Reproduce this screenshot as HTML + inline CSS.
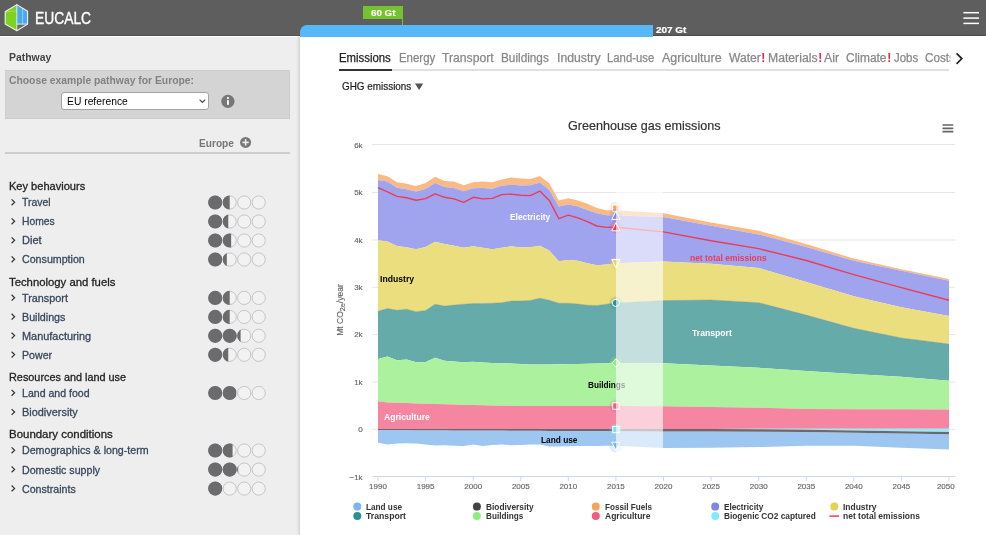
<!DOCTYPE html><html><head><meta charset="utf-8"><title>EUCALC</title><style>
html,body{margin:0;padding:0}
body{width:986px;height:535px;overflow:hidden;position:relative;background:#eee;font-family:"Liberation Sans",sans-serif;}
.t{position:absolute;white-space:nowrap;line-height:1;transform:translateY(-50%);}
#w{position:absolute;left:0;top:0;width:986px;height:535px;will-change:transform;}
.hdr{position:absolute;left:0;top:0;width:986px;height:36.3px;background:#5e5e5e;box-shadow:inset 0 -1px 0 rgba(0,0,0,.12)}
.wl{position:absolute;left:0;top:36px;width:300px;height:1px;background:#fff}
.panel{position:absolute;left:300px;top:36.3px;width:686px;height:499px;background:#fff;box-shadow:-1px 0 3px rgba(0,0,0,.16)}
.bar{position:absolute;left:300px;top:25px;width:353px;height:11.5px;background:#56b8f8;border-top-left-radius:7px}
.gt{position:absolute;left:363px;top:6px;width:39.5px;height:12.5px;background:#76c22e}
.gtl{position:absolute;left:401.5px;top:6px;width:1px;height:19px;background:#76c22e}
.box{position:absolute;left:5px;top:69.5px;width:285px;height:49.5px;background:#d4d4d4;box-sizing:border-box;border:1px dotted #c6c6c6}
.sel{position:absolute;left:60.8px;top:91.6px;width:148px;height:18.9px;box-sizing:border-box;background:#fff;border:1px solid #a3a3a3;border-radius:3px}
.hr{position:absolute;left:5px;top:152px;width:285px;height:1.5px;background:#cdcdcd}
.tabline{position:absolute;left:339px;top:69.4px;width:610px;height:1.4px;background:#e0e0e0}
.tabsel{position:absolute;left:339px;top:69.1px;width:52.5px;height:2px;background:#333}
svg{position:absolute;left:0;top:0}

</style></head><body><div id="w">
<div class="hdr"></div><div class="wl"></div><div class="panel"></div><div class="bar"></div><div class="gt"></div><div class="gtl"></div>
<div class="box"></div><div class="sel"></div><div class="hr"></div><div class="tabline"></div><div class="tabsel"></div>
<svg width="986" height="535" viewBox="0 0 986 535">
<g stroke-linejoin="round"><polygon points="16.8,4.6 16.8,30.7 5.2,24.1 5.2,11.8" fill="#7ed321"/><polygon points="16.8,4.6 27.6,11.2 27.6,24.1 16.8,24.1" fill="#4aa8ee"/><polygon points="16.8,24.1 27.6,24.1 16.8,30.7" fill="#6a6a6a"/><line x1="22.6" y1="8.2" x2="22.6" y2="24.1" stroke="#8fcaf7" stroke-width="1"/><line x1="5.2" y1="11.8" x2="16.8" y2="11" stroke="#a6e35a" stroke-width="0.8"/><line x1="16.8" y1="24.1" x2="27.6" y2="24.1" stroke="#e8f4ff" stroke-width="0.9"/><line x1="16.8" y1="4.6" x2="16.8" y2="30.7" stroke="#e8ffe0" stroke-width="0.9"/><polygon points="16.8,4.6 27.6,11.2 27.6,24.1 16.8,30.7 5.2,24.1 5.2,11.8" fill="none" stroke="#f2f2f2" stroke-width="1.1"/></g>
<rect x="963.4" y="11.95" width="15.6" height="1.5" fill="#fff"/>
<rect x="963.4" y="17.35" width="15.6" height="1.5" fill="#fff"/>
<rect x="963.4" y="22.65" width="15.6" height="1.5" fill="#fff"/>
<polyline points="199.6,99.6 202.4,102.4 205.2,99.6" fill="none" stroke="#444" stroke-width="1.2"/>
<circle cx="227.9" cy="101.3" r="6.6" fill="#777"/><rect x="227" y="100.2" width="1.9" height="4.6" fill="#fff"/><circle cx="227.95" cy="98.1" r="1.1" fill="#fff"/>
<circle cx="245.6" cy="142.4" r="5.5" fill="#777"/><rect x="242.4" y="141.6" width="6.4" height="1.6" fill="#eee"/><rect x="244.8" y="139.2" width="1.6" height="6.4" fill="#eee"/>
<polyline points="11.6,199.4 14.6,202.3 11.6,205.20000000000002" fill="none" stroke="#333" stroke-width="1.2"/>
<circle cx="215.2" cy="202.5" r="6.6" fill="#f2f2f2" stroke="#c4c4c4" stroke-width="1"/>
<circle cx="215.2" cy="202.5" r="7.1" fill="#6b6b6e"/>
<circle cx="229.7" cy="202.5" r="6.6" fill="#f2f2f2" stroke="#c4c4c4" stroke-width="1"/>
<clipPath id="c1"><rect x="222.5" y="194.5" width="7.20" height="16"/></clipPath>
<circle cx="229.7" cy="202.5" r="7.1" fill="#6b6b6e" clip-path="url(#c1)"/>
<circle cx="244.2" cy="202.5" r="6.6" fill="#f2f2f2" stroke="#c4c4c4" stroke-width="1"/>
<circle cx="258.7" cy="202.5" r="6.6" fill="#f2f2f2" stroke="#c4c4c4" stroke-width="1"/>
<polyline points="11.6,218.4 14.6,221.3 11.6,224.20000000000002" fill="none" stroke="#333" stroke-width="1.2"/>
<circle cx="215.2" cy="221.5" r="6.6" fill="#f2f2f2" stroke="#c4c4c4" stroke-width="1"/>
<circle cx="215.2" cy="221.5" r="7.1" fill="#6b6b6e"/>
<circle cx="229.7" cy="221.5" r="6.6" fill="#f2f2f2" stroke="#c4c4c4" stroke-width="1"/>
<clipPath id="c2"><rect x="222.5" y="213.5" width="5.76" height="16"/></clipPath>
<circle cx="229.7" cy="221.5" r="7.1" fill="#6b6b6e" clip-path="url(#c2)"/>
<circle cx="244.2" cy="221.5" r="6.6" fill="#f2f2f2" stroke="#c4c4c4" stroke-width="1"/>
<circle cx="258.7" cy="221.5" r="6.6" fill="#f2f2f2" stroke="#c4c4c4" stroke-width="1"/>
<polyline points="11.6,237.4 14.6,240.3 11.6,243.20000000000002" fill="none" stroke="#333" stroke-width="1.2"/>
<circle cx="215.2" cy="240.5" r="6.6" fill="#f2f2f2" stroke="#c4c4c4" stroke-width="1"/>
<circle cx="215.2" cy="240.5" r="7.1" fill="#6b6b6e"/>
<circle cx="229.7" cy="240.5" r="6.6" fill="#f2f2f2" stroke="#c4c4c4" stroke-width="1"/>
<clipPath id="c3"><rect x="222.5" y="232.5" width="8.64" height="16"/></clipPath>
<circle cx="229.7" cy="240.5" r="7.1" fill="#6b6b6e" clip-path="url(#c3)"/>
<circle cx="244.2" cy="240.5" r="6.6" fill="#f2f2f2" stroke="#c4c4c4" stroke-width="1"/>
<circle cx="258.7" cy="240.5" r="6.6" fill="#f2f2f2" stroke="#c4c4c4" stroke-width="1"/>
<polyline points="11.6,256.40000000000003 14.6,259.3 11.6,262.2" fill="none" stroke="#333" stroke-width="1.2"/>
<circle cx="215.2" cy="259.5" r="6.6" fill="#f2f2f2" stroke="#c4c4c4" stroke-width="1"/>
<circle cx="215.2" cy="259.5" r="7.1" fill="#6b6b6e"/>
<circle cx="229.7" cy="259.5" r="6.6" fill="#f2f2f2" stroke="#c4c4c4" stroke-width="1"/>
<clipPath id="c4"><rect x="222.5" y="251.5" width="4.32" height="16"/></clipPath>
<circle cx="229.7" cy="259.5" r="7.1" fill="#6b6b6e" clip-path="url(#c4)"/>
<circle cx="244.2" cy="259.5" r="6.6" fill="#f2f2f2" stroke="#c4c4c4" stroke-width="1"/>
<circle cx="258.7" cy="259.5" r="6.6" fill="#f2f2f2" stroke="#c4c4c4" stroke-width="1"/>
<polyline points="11.6,294.8 14.6,297.7 11.6,300.59999999999997" fill="none" stroke="#333" stroke-width="1.2"/>
<circle cx="215.2" cy="297.9" r="6.6" fill="#f2f2f2" stroke="#c4c4c4" stroke-width="1"/>
<circle cx="215.2" cy="297.9" r="7.1" fill="#6b6b6e"/>
<circle cx="229.7" cy="297.9" r="6.6" fill="#f2f2f2" stroke="#c4c4c4" stroke-width="1"/>
<clipPath id="c5"><rect x="222.5" y="289.9" width="7.20" height="16"/></clipPath>
<circle cx="229.7" cy="297.9" r="7.1" fill="#6b6b6e" clip-path="url(#c5)"/>
<circle cx="244.2" cy="297.9" r="6.6" fill="#f2f2f2" stroke="#c4c4c4" stroke-width="1"/>
<circle cx="258.7" cy="297.9" r="6.6" fill="#f2f2f2" stroke="#c4c4c4" stroke-width="1"/>
<polyline points="11.6,313.8 14.6,316.7 11.6,319.59999999999997" fill="none" stroke="#333" stroke-width="1.2"/>
<circle cx="215.2" cy="316.9" r="6.6" fill="#f2f2f2" stroke="#c4c4c4" stroke-width="1"/>
<circle cx="215.2" cy="316.9" r="7.1" fill="#6b6b6e"/>
<circle cx="229.7" cy="316.9" r="6.6" fill="#f2f2f2" stroke="#c4c4c4" stroke-width="1"/>
<clipPath id="c6"><rect x="222.5" y="308.9" width="7.20" height="16"/></clipPath>
<circle cx="229.7" cy="316.9" r="7.1" fill="#6b6b6e" clip-path="url(#c6)"/>
<circle cx="244.2" cy="316.9" r="6.6" fill="#f2f2f2" stroke="#c4c4c4" stroke-width="1"/>
<circle cx="258.7" cy="316.9" r="6.6" fill="#f2f2f2" stroke="#c4c4c4" stroke-width="1"/>
<polyline points="11.6,332.70000000000005 14.6,335.6 11.6,338.5" fill="none" stroke="#333" stroke-width="1.2"/>
<circle cx="215.2" cy="335.8" r="6.6" fill="#f2f2f2" stroke="#c4c4c4" stroke-width="1"/>
<circle cx="215.2" cy="335.8" r="7.1" fill="#6b6b6e"/>
<circle cx="229.7" cy="335.8" r="6.6" fill="#f2f2f2" stroke="#c4c4c4" stroke-width="1"/>
<circle cx="229.7" cy="335.8" r="7.1" fill="#6b6b6e"/>
<circle cx="244.2" cy="335.8" r="6.6" fill="#f2f2f2" stroke="#c4c4c4" stroke-width="1"/>
<clipPath id="c7"><rect x="237.0" y="327.8" width="3.60" height="16"/></clipPath>
<circle cx="244.2" cy="335.8" r="7.1" fill="#6b6b6e" clip-path="url(#c7)"/>
<circle cx="258.7" cy="335.8" r="6.6" fill="#f2f2f2" stroke="#c4c4c4" stroke-width="1"/>
<polyline points="11.6,351.70000000000005 14.6,354.6 11.6,357.5" fill="none" stroke="#333" stroke-width="1.2"/>
<circle cx="215.2" cy="354.8" r="6.6" fill="#f2f2f2" stroke="#c4c4c4" stroke-width="1"/>
<circle cx="215.2" cy="354.8" r="7.1" fill="#6b6b6e"/>
<circle cx="229.7" cy="354.8" r="6.6" fill="#f2f2f2" stroke="#c4c4c4" stroke-width="1"/>
<clipPath id="c8"><rect x="222.5" y="346.8" width="5.76" height="16"/></clipPath>
<circle cx="229.7" cy="354.8" r="7.1" fill="#6b6b6e" clip-path="url(#c8)"/>
<circle cx="244.2" cy="354.8" r="6.6" fill="#f2f2f2" stroke="#c4c4c4" stroke-width="1"/>
<circle cx="258.7" cy="354.8" r="6.6" fill="#f2f2f2" stroke="#c4c4c4" stroke-width="1"/>
<polyline points="11.6,389.90000000000003 14.6,392.8 11.6,395.7" fill="none" stroke="#333" stroke-width="1.2"/>
<circle cx="215.2" cy="393.0" r="6.6" fill="#f2f2f2" stroke="#c4c4c4" stroke-width="1"/>
<circle cx="215.2" cy="393.0" r="7.1" fill="#6b6b6e"/>
<circle cx="229.7" cy="393.0" r="6.6" fill="#f2f2f2" stroke="#c4c4c4" stroke-width="1"/>
<clipPath id="c9"><rect x="222.5" y="385.0" width="13.68" height="16"/></clipPath>
<circle cx="229.7" cy="393.0" r="7.1" fill="#6b6b6e" clip-path="url(#c9)"/>
<circle cx="244.2" cy="393.0" r="6.6" fill="#f2f2f2" stroke="#c4c4c4" stroke-width="1"/>
<circle cx="258.7" cy="393.0" r="6.6" fill="#f2f2f2" stroke="#c4c4c4" stroke-width="1"/>
<polyline points="11.6,409.1 14.6,412 11.6,414.9" fill="none" stroke="#333" stroke-width="1.2"/>
<polyline points="11.6,447.40000000000003 14.6,450.3 11.6,453.2" fill="none" stroke="#333" stroke-width="1.2"/>
<circle cx="215.2" cy="450.5" r="6.6" fill="#f2f2f2" stroke="#c4c4c4" stroke-width="1"/>
<circle cx="215.2" cy="450.5" r="7.1" fill="#6b6b6e"/>
<circle cx="229.7" cy="450.5" r="6.6" fill="#f2f2f2" stroke="#c4c4c4" stroke-width="1"/>
<clipPath id="c10"><rect x="222.5" y="442.5" width="10.08" height="16"/></clipPath>
<circle cx="229.7" cy="450.5" r="7.1" fill="#6b6b6e" clip-path="url(#c10)"/>
<circle cx="244.2" cy="450.5" r="6.6" fill="#f2f2f2" stroke="#c4c4c4" stroke-width="1"/>
<circle cx="258.7" cy="450.5" r="6.6" fill="#f2f2f2" stroke="#c4c4c4" stroke-width="1"/>
<polyline points="11.6,466.5 14.6,469.4 11.6,472.29999999999995" fill="none" stroke="#333" stroke-width="1.2"/>
<circle cx="215.2" cy="469.59999999999997" r="6.6" fill="#f2f2f2" stroke="#c4c4c4" stroke-width="1"/>
<circle cx="215.2" cy="469.59999999999997" r="7.1" fill="#6b6b6e"/>
<circle cx="229.7" cy="469.59999999999997" r="6.6" fill="#f2f2f2" stroke="#c4c4c4" stroke-width="1"/>
<circle cx="229.7" cy="469.59999999999997" r="7.1" fill="#6b6b6e"/>
<circle cx="244.2" cy="469.59999999999997" r="6.6" fill="#f2f2f2" stroke="#c4c4c4" stroke-width="1"/>
<clipPath id="c11"><rect x="237.0" y="461.59999999999997" width="1.15" height="16"/></clipPath>
<circle cx="244.2" cy="469.59999999999997" r="7.1" fill="#6b6b6e" clip-path="url(#c11)"/>
<circle cx="258.7" cy="469.59999999999997" r="6.6" fill="#f2f2f2" stroke="#c4c4c4" stroke-width="1"/>
<polyline points="11.6,485.5 14.6,488.4 11.6,491.29999999999995" fill="none" stroke="#333" stroke-width="1.2"/>
<circle cx="215.2" cy="488.59999999999997" r="6.6" fill="#f2f2f2" stroke="#c4c4c4" stroke-width="1"/>
<circle cx="215.2" cy="488.59999999999997" r="7.1" fill="#6b6b6e"/>
<circle cx="229.7" cy="488.59999999999997" r="6.6" fill="#f2f2f2" stroke="#c4c4c4" stroke-width="1"/>
<circle cx="244.2" cy="488.59999999999997" r="6.6" fill="#f2f2f2" stroke="#c4c4c4" stroke-width="1"/>
<circle cx="258.7" cy="488.59999999999997" r="6.6" fill="#f2f2f2" stroke="#c4c4c4" stroke-width="1"/>
<polyline points="956.6,53.4 961.8,58.6 956.6,63.8" fill="none" stroke="#222" stroke-width="1.7"/>
<polygon points="415,83.4 423.2,83.4 419.1,90" fill="#555"/>
<line x1="943.2" y1="125.0" x2="952.6" y2="125.0" stroke="#666" stroke-width="1.7" stroke-linecap="round"/>
<line x1="943.2" y1="128.35" x2="952.6" y2="128.35" stroke="#666" stroke-width="1.7" stroke-linecap="round"/>
<line x1="943.2" y1="131.7" x2="952.6" y2="131.7" stroke="#666" stroke-width="1.7" stroke-linecap="round"/>
<rect x="372.3" y="144.0" width="583" height="1" fill="#e6e6e6"/>
<rect x="372.3" y="192.0" width="583" height="1" fill="#e6e6e6"/>
<rect x="372.3" y="239.5" width="583" height="1" fill="#e6e6e6"/>
<rect x="372.3" y="286.8" width="583" height="1" fill="#e6e6e6"/>
<rect x="372.3" y="334.1" width="583" height="1" fill="#e6e6e6"/>
<rect x="372.3" y="381.5" width="583" height="1" fill="#e6e6e6"/>
<rect x="372.3" y="428.8" width="583" height="1" fill="#e6e6e6"/>
<polygon points="378.0,174.1 387.5,176.3 397.0,182.3 406.6,183.8 416.1,186.0 425.6,183.0 435.1,176.8 444.6,181.0 454.1,181.6 463.7,185.3 473.2,182.3 482.7,181.6 492.2,182.3 501.7,179.5 511.2,177.6 520.8,178.6 530.3,179.1 539.8,176.1 549.3,183.3 558.8,200.4 568.3,198.3 577.9,200.4 587.4,203.8 596.9,207.9 606.4,210.2 615.9,210.2 663.5,213.2 711.1,222.4 758.7,230.8 806.3,244.1 853.8,258.6 901.4,269.3 949.0,279.1 949.0,280.7 901.4,270.8 853.8,260.8 806.3,247.0 758.7,234.4 711.1,225.8 663.5,217.1 615.9,215.6 606.4,215.2 596.9,213.2 587.4,209.9 577.9,206.6 568.3,204.6 558.8,206.6 549.3,190.0 539.8,182.5 530.3,185.3 520.8,185.5 511.2,184.5 501.7,185.8 492.2,188.8 482.7,188.1 473.2,188.3 463.7,191.3 454.1,188.0 444.6,187.1 435.1,183.0 425.6,189.1 416.1,191.6 406.6,189.3 397.0,187.8 387.5,181.6 378.0,180.0" fill="#f9ba85"/>
<polygon points="378.0,180.0 387.5,181.6 397.0,187.8 406.6,189.3 416.1,191.6 425.6,189.1 435.1,183.0 444.6,187.1 454.1,188.0 463.7,191.3 473.2,188.3 482.7,188.1 492.2,188.8 501.7,185.8 511.2,184.5 520.8,185.5 530.3,185.3 539.8,182.5 549.3,190.0 558.8,206.6 568.3,204.6 577.9,206.6 587.4,209.9 596.9,213.2 606.4,215.2 615.9,215.6 663.5,217.1 711.1,225.8 758.7,234.4 806.3,247.0 853.8,260.8 901.4,270.8 949.0,280.7 949.0,315.9 901.4,307.3 853.8,296.3 806.3,282.0 758.7,267.9 711.1,263.8 663.5,261.5 615.9,263.3 606.4,264.5 596.9,265.3 587.4,263.3 577.9,260.8 568.3,260.0 558.8,261.3 549.3,250.5 539.8,245.8 530.3,247.3 520.8,247.4 511.2,246.3 501.7,247.8 492.2,249.2 482.7,247.8 473.2,246.2 463.7,247.7 454.1,245.7 444.6,244.0 435.1,241.8 425.6,247.0 416.1,249.3 406.6,247.2 397.0,246.0 387.5,241.5 378.0,240.3" fill="#a0a4ef"/>
<polygon points="378.0,240.3 387.5,241.5 397.0,246.0 406.6,247.2 416.1,249.3 425.6,247.0 435.1,241.8 444.6,244.0 454.1,245.7 463.7,247.7 473.2,246.2 482.7,247.8 492.2,249.2 501.7,247.8 511.2,246.3 520.8,247.4 530.3,247.3 539.8,245.8 549.3,250.5 558.8,261.3 568.3,260.0 577.9,260.8 587.4,263.3 596.9,265.3 606.4,264.5 615.9,263.3 663.5,261.5 711.1,263.8 758.7,267.9 806.3,282.0 853.8,296.3 901.4,307.3 949.0,315.9 949.0,344.1 901.4,337.9 853.8,328.3 806.3,315.1 758.7,302.7 711.1,299.9 663.5,300.6 615.9,302.9 606.4,304.2 596.9,305.5 587.4,305.2 577.9,304.0 568.3,303.2 558.8,303.2 549.3,300.2 539.8,298.2 530.3,300.4 520.8,300.9 511.2,301.1 501.7,302.7 492.2,303.2 482.7,303.6 473.2,303.6 463.7,304.2 454.1,305.1 444.6,306.1 435.1,304.2 425.6,310.5 416.1,311.7 406.6,309.2 397.0,310.2 387.5,308.5 378.0,311.2" fill="#ebde7f"/>
<polygon points="378.0,311.2 387.5,308.5 397.0,310.2 406.6,309.2 416.1,311.7 425.6,310.5 435.1,304.2 444.6,306.1 454.1,305.1 463.7,304.2 473.2,303.6 482.7,303.6 492.2,303.2 501.7,302.7 511.2,301.1 520.8,300.9 530.3,300.4 539.8,298.2 549.3,300.2 558.8,303.2 568.3,303.2 577.9,304.0 587.4,305.2 596.9,305.5 606.4,304.2 615.9,302.9 663.5,300.6 711.1,299.9 758.7,302.7 806.3,315.1 853.8,328.3 901.4,337.9 949.0,344.1 949.0,380.8 901.4,376.8 853.8,374.0 806.3,371.0 758.7,367.8 711.1,365.5 663.5,363.3 615.9,363.0 606.4,363.2 596.9,363.5 587.4,363.8 577.9,364.0 568.3,364.1 558.8,364.3 549.3,364.5 539.8,364.6 530.3,364.6 520.8,364.0 511.2,363.5 501.7,363.3 492.2,363.1 482.7,362.5 473.2,361.8 463.7,362.3 454.1,361.6 444.6,360.8 435.1,357.8 425.6,362.0 416.1,362.3 406.6,359.5 397.0,360.3 387.5,356.6 378.0,359.1" fill="#64aba9"/>
<polygon points="378.0,359.1 387.5,356.6 397.0,360.3 406.6,359.5 416.1,362.3 425.6,362.0 435.1,357.8 444.6,360.8 454.1,361.6 463.7,362.3 473.2,361.8 482.7,362.5 492.2,363.1 501.7,363.3 511.2,363.5 520.8,364.0 530.3,364.6 539.8,364.6 549.3,364.5 558.8,364.3 568.3,364.1 577.9,364.0 587.4,363.8 596.9,363.5 606.4,363.2 615.9,363.0 663.5,363.3 711.1,365.5 758.7,367.8 806.3,371.0 853.8,374.0 901.4,376.8 949.0,380.8 949.0,409.4 901.4,409.3 853.8,409.2 806.3,409.0 758.7,407.7 711.1,406.9 663.5,406.3 615.9,406.0 606.4,406.0 596.9,406.0 587.4,406.0 577.9,406.0 568.3,406.0 558.8,406.0 549.3,406.0 539.8,406.0 530.3,406.0 520.8,405.9 511.2,405.8 501.7,405.7 492.2,405.5 482.7,405.3 473.2,405.1 463.7,404.9 454.1,404.6 444.6,404.3 435.1,404.0 425.6,403.7 416.1,403.4 406.6,403.1 397.0,402.8 387.5,402.4 378.0,401.2" fill="#acf29e"/>
<polygon points="378.0,401.2 387.5,402.4 397.0,402.8 406.6,403.1 416.1,403.4 425.6,403.7 435.1,404.0 444.6,404.3 454.1,404.6 463.7,404.9 473.2,405.1 482.7,405.3 492.2,405.5 501.7,405.7 511.2,405.8 520.8,405.9 530.3,406.0 539.8,406.0 549.3,406.0 558.8,406.0 568.3,406.0 577.9,406.0 587.4,406.0 596.9,406.0 606.4,406.0 615.9,406.0 663.5,406.3 711.1,406.9 758.7,407.7 806.3,409.0 853.8,409.2 901.4,409.3 949.0,409.4 949.0,428.7 901.4,428.7 853.8,428.7 806.3,428.7 758.7,428.8 711.1,428.9 663.5,429.0 615.9,429.0 606.4,429.0 596.9,429.0 587.4,429.0 577.9,429.0 568.3,429.0 558.8,429.0 549.3,429.0 539.8,429.0 530.3,429.0 520.8,429.0 511.2,429.0 501.7,429.0 492.2,429.0 482.7,429.0 473.2,429.0 463.7,429.0 454.1,429.0 444.6,429.0 435.1,429.0 425.6,429.0 416.1,429.0 406.6,429.0 397.0,429.0 387.5,429.0 378.0,429.0" fill="#f585a0"/>
<polygon points="378.0,430.0 387.5,430.0 397.0,430.1 406.6,430.1 416.1,430.2 425.6,430.2 435.1,430.3 444.6,430.3 454.1,430.4 463.7,430.4 473.2,430.5 482.7,430.5 492.2,430.6 501.7,430.6 511.2,430.7 520.8,430.7 530.3,430.8 539.8,430.8 549.3,430.9 558.8,430.9 568.3,431.0 577.9,431.0 587.4,431.0 596.9,431.1 606.4,431.1 615.9,431.2 663.5,431.5 711.1,431.6 758.7,431.7 806.3,432.0 853.8,432.8 901.4,433.5 949.0,434.2 949.0,449.5 901.4,447.7 853.8,445.7 806.3,445.8 758.7,447.1 711.1,447.7 663.5,447.9 615.9,445.7 606.4,445.8 596.9,445.9 587.4,446.0 577.9,446.0 568.3,446.2 558.8,446.4 549.3,446.6 539.8,444.4 530.3,444.6 520.8,445.0 511.2,445.2 501.7,444.4 492.2,444.9 482.7,445.9 473.2,444.6 463.7,445.9 454.1,445.7 444.6,445.2 435.1,445.6 425.6,444.4 416.1,443.6 406.6,443.2 397.0,443.4 387.5,444.6 378.0,442.7" fill="#9dc7f1"/>
<polygon points="378.0,429.0 387.5,429.0 397.0,429.0 406.6,429.0 416.1,429.0 425.6,429.0 435.1,429.0 444.6,429.0 454.1,429.0 463.7,429.0 473.2,429.0 482.7,429.0 492.2,429.0 501.7,429.0 511.2,429.0 520.8,429.0 530.3,429.0 539.8,429.0 549.3,429.0 558.8,429.0 568.3,429.0 577.9,429.0 587.4,429.0 596.9,429.0 606.4,429.0 615.9,429.0 663.5,429.0 711.1,428.9 758.7,428.8 806.3,428.7 853.8,428.7 901.4,428.7 949.0,428.7 949.0,431.9 901.4,431.2 853.8,430.5 806.3,429.7 758.7,429.3 711.1,429.1 663.5,429.0 615.9,429.0 606.4,429.0 596.9,429.0 587.4,429.0 577.9,429.0 568.3,429.0 558.8,429.0 549.3,429.0 539.8,429.0 530.3,429.0 520.8,429.0 511.2,429.0 501.7,429.0 492.2,429.0 482.7,429.0 473.2,429.0 463.7,429.0 454.1,429.0 444.6,429.0 435.1,429.0 425.6,429.0 416.1,429.0 406.6,429.0 397.0,429.0 387.5,429.0 378.0,429.0" fill="#8fecfa"/>
<polygon points="378.0,429.0 387.5,429.0 397.0,429.0 406.6,429.0 416.1,429.0 425.6,429.0 435.1,429.0 444.6,429.0 454.1,429.0 463.7,429.0 473.2,429.0 482.7,429.0 492.2,429.0 501.7,429.0 511.2,429.0 520.8,429.0 530.3,429.0 539.8,429.0 549.3,429.0 558.8,429.0 568.3,429.0 577.9,429.0 587.4,429.0 596.9,429.0 606.4,429.0 615.9,429.0 663.5,429.0 711.1,429.1 758.7,429.3 806.3,429.7 853.8,430.5 901.4,431.2 949.0,431.9 949.0,434.2 901.4,433.5 853.8,432.8 806.3,432.0 758.7,431.7 711.1,431.6 663.5,431.5 615.9,431.2 606.4,431.1 596.9,431.1 587.4,431.0 577.9,431.0 568.3,431.0 558.8,430.9 549.3,430.9 539.8,430.8 530.3,430.8 520.8,430.7 511.2,430.7 501.7,430.6 492.2,430.6 482.7,430.5 473.2,430.5 463.7,430.4 454.1,430.4 444.6,430.3 435.1,430.3 425.6,430.2 416.1,430.2 406.6,430.1 397.0,430.1 387.5,430.0 378.0,430.0" fill="#6a6a6e"/>
<polyline fill="none" stroke="#8a8a78" stroke-opacity=".55" stroke-width="0.6" points="378.0,311.2 387.5,308.5 397.0,310.2 406.6,309.2 416.1,311.7 425.6,310.5 435.1,304.2 444.6,306.1 454.1,305.1 463.7,304.2 473.2,303.6 482.7,303.6 492.2,303.2 501.7,302.7 511.2,301.1 520.8,300.9 530.3,300.4 539.8,298.2 549.3,300.2 558.8,303.2 568.3,303.2 577.9,304.0 587.4,305.2 596.9,305.5 606.4,304.2 615.9,302.9 663.5,300.6 711.1,299.9 758.7,302.7 806.3,315.1 853.8,328.3 901.4,337.9 949.0,344.1"/>
<polyline fill="none" stroke="#ec3c55" stroke-width="1.4" stroke-linejoin="round" points="378.0,187.6 387.5,191.8 397.0,196.4 406.6,197.8 416.1,200.3 425.6,198.6 435.1,193.8 444.6,197.3 454.1,198.9 463.7,202.4 473.2,197.3 482.7,198.9 492.2,198.4 501.7,194.6 511.2,194.1 520.8,195.3 530.3,195.6 539.8,191.1 549.3,200.4 558.8,218.7 568.3,215.2 577.9,217.9 587.4,221.6 596.9,226.0 606.4,227.4 615.9,227.2 663.5,231.9 711.1,240.7 758.7,248.6 806.3,260.5 853.8,274.6 901.4,287.7 949.0,300.2"/>
<circle cx="615.9" cy="208.2" r="6.5" fill="#f7a35c" fill-opacity=".22"/>
<rect x="612.7" y="205.0" width="6.4" height="6.4" fill="#f7a35c" stroke="#fff" stroke-width="1"/>
<circle cx="615.9" cy="215.6" r="6.5" fill="#8085e9" fill-opacity=".22"/>
<polygon points="615.9,211.4 620.1,219.4 611.7,219.4" fill="#8085e9" stroke="#fff" stroke-width="1"/>
<circle cx="615.9" cy="227" r="6.5" fill="#ec3c55" fill-opacity=".22"/>
<polygon points="615.9,222.8 620.1,230.8 611.7,230.8" fill="#ec3c55" stroke="#fff" stroke-width="1"/>
<circle cx="615.9" cy="263.3" r="6.5" fill="#e4d354" fill-opacity=".22"/>
<polygon points="615.9,267.5 620.1,259.5 611.7,259.5" fill="#e4d354" stroke="#fff" stroke-width="1"/>
<circle cx="615.9" cy="302.9" r="6.5" fill="#2b908f" fill-opacity=".22"/>
<circle cx="615.9" cy="302.9" r="3.6" fill="#2b908f" stroke="#fff" stroke-width="1"/>
<circle cx="615.9" cy="363" r="6.5" fill="#90ed7d" fill-opacity=".22"/>
<polygon points="615.9,358.8 620.1,363 615.9,367.2 611.7,363" fill="#90ed7d" stroke="#fff" stroke-width="1"/>
<circle cx="615.9" cy="406" r="6.5" fill="#f15c80" fill-opacity=".22"/>
<rect x="612.7" y="402.8" width="6.4" height="6.4" fill="#f15c80" stroke="#fff" stroke-width="1"/>
<circle cx="615.9" cy="429.5" r="6.5" fill="#6fe3f7" fill-opacity=".22"/>
<rect x="612.7" y="426.3" width="6.4" height="6.4" fill="#6fe3f7" stroke="#fff" stroke-width="1"/>
<circle cx="615.9" cy="446" r="6.5" fill="#7cb5ec" fill-opacity=".22"/>
<polygon points="615.9,450.2 620.1,442.2 611.7,442.2" fill="#7cb5ec" stroke="#fff" stroke-width="1"/>
<rect x="372.3" y="476" width="583" height="1" fill="#ccd6eb"/>
<rect x="377.5" y="476" width="1" height="5" fill="#ccd6eb"/>
<rect x="425.1" y="476" width="1" height="5" fill="#ccd6eb"/>
<rect x="472.7" y="476" width="1" height="5" fill="#ccd6eb"/>
<rect x="520.3" y="476" width="1" height="5" fill="#ccd6eb"/>
<rect x="567.8" y="476" width="1" height="5" fill="#ccd6eb"/>
<rect x="615.4" y="476" width="1" height="5" fill="#ccd6eb"/>
<rect x="663.0" y="476" width="1" height="5" fill="#ccd6eb"/>
<rect x="710.6" y="476" width="1" height="5" fill="#ccd6eb"/>
<rect x="758.2" y="476" width="1" height="5" fill="#ccd6eb"/>
<rect x="805.8" y="476" width="1" height="5" fill="#ccd6eb"/>
<rect x="853.3" y="476" width="1" height="5" fill="#ccd6eb"/>
<rect x="900.9" y="476" width="1" height="5" fill="#ccd6eb"/>
<rect x="948.5" y="476" width="1" height="5" fill="#ccd6eb"/>
<circle cx="357.3" cy="506.6" r="4" fill="#7cb5ec"/>
<circle cx="476.9" cy="506.6" r="4" fill="#434348"/>
<circle cx="595.8" cy="506.6" r="4" fill="#f7a35c"/>
<circle cx="715.2" cy="506.6" r="4" fill="#8085e9"/>
<circle cx="834.3" cy="506.6" r="4" fill="#e4d354"/>
<circle cx="357.3" cy="516.1" r="4" fill="#2b908f"/>
<circle cx="476.9" cy="516.1" r="4" fill="#90ed7d"/>
<circle cx="595.8" cy="516.1" r="4" fill="#f15c80"/>
<circle cx="715.2" cy="516.1" r="4" fill="#80eaff"/>
<line x1="829.4" y1="516.1" x2="839" y2="516.1" stroke="#ec3c55" stroke-width="1.5"/>
</svg>
<div class="t" id="yt" style="left:340.4px;top:310.2px;font-size:8.5px;color:#666;-webkit-text-stroke:0.15px #666;transform:translate(-50%,-50%) rotate(-90deg)">Mt CO<span style="font-size:7.2px;position:relative;top:1.6px">2e</span>/year</div>
<div class="t" id="t0" style="top:18.6px;font-size:16px;font-weight:normal;color:#fff;left:35.3px;transform-origin:0 50%;transform:translateY(-50%) scaleX(0.8643);-webkit-text-stroke:0.35px #fff;">EUCALC</div>
<div class="t" id="t1" style="top:12.8px;font-size:9.5px;font-weight:bold;color:#fff;left:370.8px;transform-origin:0 50%;transform:translateY(-50%) scaleX(1.0309);-webkit-text-stroke:0.15px #fff;">60 Gt</div>
<div class="t" id="t2" style="top:31.0px;font-size:9.2px;font-weight:bold;color:#fff;left:656.4px;transform-origin:0 50%;transform:translateY(-50%) scaleX(1.0821);-webkit-text-stroke:0.2px #fff;">207 Gt</div>
<div class="t" id="t3" style="top:56.6px;font-size:11px;font-weight:bold;color:#444;left:8.5px;transform-origin:0 50%;transform:translateY(-50%) scaleX(0.9476);">Pathway</div>
<div class="t" id="t4" style="top:79.5px;font-size:11px;font-weight:bold;color:#828282;left:8.5px;transform-origin:0 50%;transform:translateY(-50%) scaleX(0.9399);">Choose example pathway for Europe:</div>
<div class="t" id="t5" style="top:101.0px;font-size:10.5px;font-weight:normal;color:#000;left:67px;transform-origin:0 50%;transform:translateY(-50%) scaleX(0.9826);">EU reference</div>
<div class="t" id="t6" style="top:142.8px;font-size:11px;font-weight:bold;color:#777;left:198.7px;transform-origin:0 50%;transform:translateY(-50%) scaleX(0.9207);">Europe</div>
<div class="t" id="t7" style="top:187.39999999999998px;font-size:11.5px;font-weight:normal;color:#222;left:8.6px;transform-origin:0 50%;transform:translateY(-50%) scaleX(0.9611);-webkit-text-stroke:0.3px #222;">Key behaviours</div>
<div class="t" id="t8" style="top:282.5px;font-size:11.5px;font-weight:normal;color:#222;left:8.6px;transform-origin:0 50%;transform:translateY(-50%) scaleX(0.9846);-webkit-text-stroke:0.3px #222;">Technology and fuels</div>
<div class="t" id="t9" style="top:377.8px;font-size:11.5px;font-weight:normal;color:#222;left:8.6px;transform-origin:0 50%;transform:translateY(-50%) scaleX(0.9441);-webkit-text-stroke:0.3px #222;">Resources and land use</div>
<div class="t" id="t10" style="top:435.2px;font-size:11.5px;font-weight:normal;color:#222;left:8.6px;transform-origin:0 50%;transform:translateY(-50%) scaleX(0.9960);-webkit-text-stroke:0.3px #222;">Boundary conditions</div>
<div class="t" id="t11" style="top:202.4px;font-size:11px;font-weight:normal;color:#38485c;left:22.4px;transform-origin:0 50%;transform:translateY(-50%) scaleX(0.9484);-webkit-text-stroke:0.3px #38485c;">Travel</div>
<div class="t" id="t12" style="top:221.4px;font-size:11px;font-weight:normal;color:#38485c;left:22.4px;transform-origin:0 50%;transform:translateY(-50%) scaleX(0.9385);-webkit-text-stroke:0.3px #38485c;">Homes</div>
<div class="t" id="t13" style="top:240.4px;font-size:11px;font-weight:normal;color:#38485c;left:22.4px;transform-origin:0 50%;transform:translateY(-50%) scaleX(1.0070);-webkit-text-stroke:0.3px #38485c;">Diet</div>
<div class="t" id="t14" style="top:259.40000000000003px;font-size:11px;font-weight:normal;color:#38485c;left:22.4px;transform-origin:0 50%;transform:translateY(-50%) scaleX(0.9687);-webkit-text-stroke:0.3px #38485c;">Consumption</div>
<div class="t" id="t15" style="top:297.8px;font-size:11px;font-weight:normal;color:#38485c;left:22.4px;transform-origin:0 50%;transform:translateY(-50%) scaleX(0.9835);-webkit-text-stroke:0.3px #38485c;">Transport</div>
<div class="t" id="t16" style="top:316.8px;font-size:11px;font-weight:normal;color:#38485c;left:22.4px;transform-origin:0 50%;transform:translateY(-50%) scaleX(0.9722);-webkit-text-stroke:0.3px #38485c;">Buildings</div>
<div class="t" id="t17" style="top:335.70000000000005px;font-size:11px;font-weight:normal;color:#38485c;left:22.4px;transform-origin:0 50%;transform:translateY(-50%) scaleX(0.9926);-webkit-text-stroke:0.3px #38485c;">Manufacturing</div>
<div class="t" id="t18" style="top:354.70000000000005px;font-size:11px;font-weight:normal;color:#38485c;left:22.4px;transform-origin:0 50%;transform:translateY(-50%) scaleX(0.9651);-webkit-text-stroke:0.3px #38485c;">Power</div>
<div class="t" id="t19" style="top:392.90000000000003px;font-size:11px;font-weight:normal;color:#38485c;left:22.4px;transform-origin:0 50%;transform:translateY(-50%) scaleX(0.9608);-webkit-text-stroke:0.3px #38485c;">Land and food</div>
<div class="t" id="t20" style="top:412.1px;font-size:11px;font-weight:normal;color:#38485c;left:22.4px;transform-origin:0 50%;transform:translateY(-50%) scaleX(0.9920);-webkit-text-stroke:0.3px #38485c;">Biodiversity</div>
<div class="t" id="t21" style="top:450.40000000000003px;font-size:11px;font-weight:normal;color:#38485c;left:22.4px;transform-origin:0 50%;transform:translateY(-50%) scaleX(0.9676);-webkit-text-stroke:0.3px #38485c;">Demographics &amp; long-term</div>
<div class="t" id="t22" style="top:469.5px;font-size:11px;font-weight:normal;color:#38485c;left:22.4px;transform-origin:0 50%;transform:translateY(-50%) scaleX(0.9677);-webkit-text-stroke:0.3px #38485c;">Domestic supply</div>
<div class="t" id="t23" style="top:488.5px;font-size:11px;font-weight:normal;color:#38485c;left:22.4px;transform-origin:0 50%;transform:translateY(-50%) scaleX(0.9669);-webkit-text-stroke:0.3px #38485c;">Constraints</div>
<div class="t" id="t24" style="top:57.8px;font-size:12px;font-weight:normal;color:#222;left:339.4px;transform-origin:0 50%;transform:translateY(-50%) scaleX(0.9472);-webkit-text-stroke:0.25px #222;">Emissions</div>
<div class="t" id="t25" style="top:57.8px;font-size:12px;font-weight:normal;color:#888;left:398.6px;transform-origin:0 50%;transform:translateY(-50%) scaleX(0.9518);-webkit-text-stroke:0.25px #888;">Energy</div>
<div class="t" id="t26" style="top:57.8px;font-size:12px;font-weight:normal;color:#888;left:442.1px;transform-origin:0 50%;transform:translateY(-50%) scaleX(1.0136);-webkit-text-stroke:0.25px #888;">Transport</div>
<div class="t" id="t27" style="top:57.8px;font-size:12px;font-weight:normal;color:#888;left:501.4px;transform-origin:0 50%;transform:translateY(-50%) scaleX(0.9815);-webkit-text-stroke:0.25px #888;">Buildings</div>
<div class="t" id="t28" style="top:57.8px;font-size:12px;font-weight:normal;color:#888;left:556.9px;transform-origin:0 50%;transform:translateY(-50%) scaleX(1.0190);-webkit-text-stroke:0.25px #888;">Industry</div>
<div class="t" id="t29" style="top:57.8px;font-size:12px;font-weight:normal;color:#888;left:607.4px;transform-origin:0 50%;transform:translateY(-50%) scaleX(0.9431);-webkit-text-stroke:0.25px #888;">Land-use</div>
<div class="t" id="t30" style="top:57.8px;font-size:12px;font-weight:normal;color:#888;left:661.7px;transform-origin:0 50%;transform:translateY(-50%) scaleX(1.0391);-webkit-text-stroke:0.25px #888;">Agriculture</div>
<div class="t" id="t31" style="top:57.8px;font-size:12px;font-weight:normal;color:#888;left:728.6px;transform-origin:0 50%;transform:translateY(-50%) scaleX(1.0075);-webkit-text-stroke:0.25px #888;">Water</div>
<div class="t" id="t32" style="top:57.8px;font-size:12px;font-weight:normal;color:#888;left:767.8px;transform-origin:0 50%;transform:translateY(-50%) scaleX(1.0167);-webkit-text-stroke:0.25px #888;">Materials</div>
<div class="t" id="t33" style="top:57.8px;font-size:12px;font-weight:normal;color:#888;left:824px;transform-origin:0 50%;transform:translateY(-50%) scaleX(1.0224);-webkit-text-stroke:0.25px #888;">Air</div>
<div class="t" id="t34" style="top:57.8px;font-size:12px;font-weight:normal;color:#888;left:845.8px;transform-origin:0 50%;transform:translateY(-50%) scaleX(0.9954);-webkit-text-stroke:0.25px #888;">Climate</div>
<div class="t" id="t35" style="top:57.8px;font-size:12px;font-weight:normal;color:#888;left:893.6px;transform-origin:0 50%;transform:translateY(-50%) scaleX(0.9503);-webkit-text-stroke:0.25px #888;">Jobs</div>
<div class="t" id="t36" style="top:57.8px;font-size:12px;font-weight:normal;color:#888;left:925px;transform-origin:0 50%;transform:translateY(-50%) scaleX(0.9750);width:26.2px;overflow:hidden;-webkit-text-stroke:0.25px #888;">Costs</div>
<div class="t" id="t37" style="top:57.8px;font-size:12px;font-weight:bold;color:#ee2440;left:761.3px;">!</div>
<div class="t" id="t38" style="top:57.8px;font-size:12px;font-weight:bold;color:#ee2440;left:818.3px;">!</div>
<div class="t" id="t39" style="top:57.8px;font-size:12px;font-weight:bold;color:#ee2440;left:887.3px;">!</div>
<div class="t" id="t40" style="top:86.3px;font-size:10.5px;font-weight:normal;color:#222;left:342.2px;transform-origin:0 50%;transform:translateY(-50%) scaleX(0.9427);-webkit-text-stroke:0.2px #222;">GHG emissions</div>
<div class="t" id="t41" style="top:124.6px;font-size:13px;font-weight:normal;color:#333;left:568px;transform-origin:0 50%;transform:translateY(-50%) scaleX(0.9681);-webkit-text-stroke:0.2px #333;">Greenhouse gas emissions</div>
<div class="t" id="t42" style="top:145.5px;font-size:8px;font-weight:normal;color:#666;right:623.4px;-webkit-text-stroke:0.15px #666;">6k</div>
<div class="t" id="t43" style="top:193px;font-size:8px;font-weight:normal;color:#666;right:623.4px;-webkit-text-stroke:0.15px #666;">5k</div>
<div class="t" id="t44" style="top:240.5px;font-size:8px;font-weight:normal;color:#666;right:623.4px;-webkit-text-stroke:0.15px #666;">4k</div>
<div class="t" id="t45" style="top:287.7px;font-size:8px;font-weight:normal;color:#666;right:623.4px;-webkit-text-stroke:0.15px #666;">3k</div>
<div class="t" id="t46" style="top:335px;font-size:8px;font-weight:normal;color:#666;right:623.4px;-webkit-text-stroke:0.15px #666;">2k</div>
<div class="t" id="t47" style="top:382.5px;font-size:8px;font-weight:normal;color:#666;right:623.4px;-webkit-text-stroke:0.15px #666;">1k</div>
<div class="t" id="t48" style="top:429.7px;font-size:8px;font-weight:normal;color:#666;right:623.4px;-webkit-text-stroke:0.15px #666;">0</div>
<div class="t" id="t49" style="top:478.0px;font-size:8px;font-weight:normal;color:#666;right:623.4px;-webkit-text-stroke:0.15px #666;">−1k</div>
<div class="t" id="t50" style="top:487.0px;font-size:8px;font-weight:normal;color:#666;left:378.0px;transform:translate(-50%,-50%);-webkit-text-stroke:0.15px #666;">1990</div>
<div class="t" id="t51" style="top:487.0px;font-size:8px;font-weight:normal;color:#666;left:425.6px;transform:translate(-50%,-50%);-webkit-text-stroke:0.15px #666;">1995</div>
<div class="t" id="t52" style="top:487.0px;font-size:8px;font-weight:normal;color:#666;left:473.2px;transform:translate(-50%,-50%);-webkit-text-stroke:0.15px #666;">2000</div>
<div class="t" id="t53" style="top:487.0px;font-size:8px;font-weight:normal;color:#666;left:520.8px;transform:translate(-50%,-50%);-webkit-text-stroke:0.15px #666;">2005</div>
<div class="t" id="t54" style="top:487.0px;font-size:8px;font-weight:normal;color:#666;left:568.3px;transform:translate(-50%,-50%);-webkit-text-stroke:0.15px #666;">2010</div>
<div class="t" id="t55" style="top:487.0px;font-size:8px;font-weight:normal;color:#666;left:615.9px;transform:translate(-50%,-50%);-webkit-text-stroke:0.15px #666;">2015</div>
<div class="t" id="t56" style="top:487.0px;font-size:8px;font-weight:normal;color:#666;left:663.5px;transform:translate(-50%,-50%);-webkit-text-stroke:0.15px #666;">2020</div>
<div class="t" id="t57" style="top:487.0px;font-size:8px;font-weight:normal;color:#666;left:711.1px;transform:translate(-50%,-50%);-webkit-text-stroke:0.15px #666;">2025</div>
<div class="t" id="t58" style="top:487.0px;font-size:8px;font-weight:normal;color:#666;left:758.7px;transform:translate(-50%,-50%);-webkit-text-stroke:0.15px #666;">2030</div>
<div class="t" id="t59" style="top:487.0px;font-size:8px;font-weight:normal;color:#666;left:806.3px;transform:translate(-50%,-50%);-webkit-text-stroke:0.15px #666;">2035</div>
<div class="t" id="t60" style="top:487.0px;font-size:8px;font-weight:normal;color:#666;left:853.8px;transform:translate(-50%,-50%);-webkit-text-stroke:0.15px #666;">2040</div>
<div class="t" id="t61" style="top:487.0px;font-size:8px;font-weight:normal;color:#666;left:901.4px;transform:translate(-50%,-50%);-webkit-text-stroke:0.15px #666;">2045</div>
<div class="t" id="t62" style="top:487.0px;font-size:8px;font-weight:normal;color:#666;left:945.8px;transform:translate(-50%,-50%);-webkit-text-stroke:0.15px #666;">2050</div>
<div class="t" id="t63" style="top:216.8px;font-size:8.5px;font-weight:bold;color:#fff;left:510.3px;transform-origin:0 50%;transform:translateY(-50%) scaleX(0.9892);">Electricity</div>
<div class="t" id="t64" style="top:279px;font-size:8.5px;font-weight:bold;color:#000;left:380.3px;transform-origin:0 50%;transform:translateY(-50%) scaleX(1.0170);">Industry</div>
<div class="t" id="t65" style="top:258px;font-size:8.5px;font-weight:bold;color:#ec3c55;left:689.8px;transform-origin:0 50%;transform:translateY(-50%) scaleX(0.9948);">net total emissions</div>
<div class="t" id="t66" style="top:332.8px;font-size:8.5px;font-weight:bold;color:#fff;left:691.6px;transform-origin:0 50%;transform:translateY(-50%) scaleX(1.0152);">Transport</div>
<div class="t" id="t67" style="top:385.1px;font-size:8.5px;font-weight:bold;color:#000;left:587.9px;transform-origin:0 50%;transform:translateY(-50%) scaleX(0.9656);">Buildings</div>
<div class="t" id="t68" style="top:416.5px;font-size:8.5px;font-weight:bold;color:#fff;left:383.6px;transform-origin:0 50%;transform:translateY(-50%) scaleX(1.0101);">Agriculture</div>
<div class="t" id="t69" style="top:440.1px;font-size:8.5px;font-weight:bold;color:#000;left:540.6px;transform-origin:0 50%;transform:translateY(-50%) scaleX(0.9782);">Land use</div>
<div class="t" id="t70" style="top:506.8px;font-size:8.5px;font-weight:bold;color:#333;left:366.1px;transform-origin:0 50%;transform:translateY(-50%) scaleX(0.9648);">Land use</div>
<div class="t" id="t71" style="top:506.8px;font-size:8.5px;font-weight:bold;color:#333;left:485.7px;transform-origin:0 50%;transform:translateY(-50%) scaleX(0.9803);">Biodiversity</div>
<div class="t" id="t72" style="top:506.8px;font-size:8.5px;font-weight:bold;color:#333;left:604.5999999999999px;transform-origin:0 50%;transform:translateY(-50%) scaleX(0.9567);">Fossil Fuels</div>
<div class="t" id="t73" style="top:506.8px;font-size:8.5px;font-weight:bold;color:#333;left:724.0px;transform-origin:0 50%;transform:translateY(-50%) scaleX(0.9646);">Electricity</div>
<div class="t" id="t74" style="top:506.8px;font-size:8.5px;font-weight:bold;color:#333;left:843.0999999999999px;transform-origin:0 50%;transform:translateY(-50%) scaleX(0.9961);">Industry</div>
<div class="t" id="t75" style="top:516.3000000000001px;font-size:8.5px;font-weight:bold;color:#333;left:366.1px;transform-origin:0 50%;transform:translateY(-50%) scaleX(1.0203);">Transport</div>
<div class="t" id="t76" style="top:516.3000000000001px;font-size:8.5px;font-weight:bold;color:#333;left:485.7px;transform-origin:0 50%;transform:translateY(-50%) scaleX(0.9604);">Buildings</div>
<div class="t" id="t77" style="top:516.3000000000001px;font-size:8.5px;font-weight:bold;color:#333;left:604.5999999999999px;transform-origin:0 50%;transform:translateY(-50%) scaleX(1.0012);">Agriculture</div>
<div class="t" id="t78" style="top:516.3000000000001px;font-size:8.5px;font-weight:bold;color:#333;left:724.0px;transform-origin:0 50%;transform:translateY(-50%) scaleX(0.9766);">Biogenic CO2 captured</div>
<div class="t" id="t79" style="top:516.3000000000001px;font-size:8.5px;font-weight:bold;color:#333;left:843.0999999999999px;transform-origin:0 50%;transform:translateY(-50%) scaleX(0.9987);">net total emissions</div>
<div style="position:absolute;left:615.9px;top:144.5px;width:47.6px;height:331.5px;background:rgba(255,255,255,.62)"></div>
</div></body></html>
